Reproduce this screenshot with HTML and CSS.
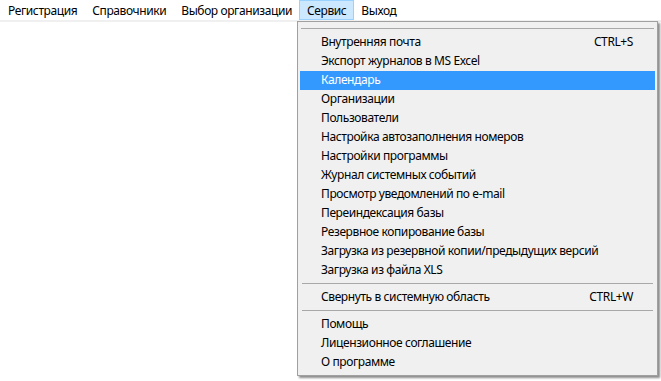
FILE: index.html
```html
<!DOCTYPE html>
<html>
  <head>
    <meta charset="utf-8">
    <title>Сервис</title>
    <link rel="stylesheet" href="styles.css">
  </head>
  <body>
    <nav class="menubar">
      <div class="menubar-item">Регистрация</div>
      <div class="menubar-item">Справочники</div>
      <div class="menubar-item">Выбор организации</div>
      <div class="menubar-item menubar-item-open">Сервис</div>
      <div class="menubar-item">Выход</div>
    </nav>
    <div class="dropdown">
      <div class="dropdown-top"></div>
      <div class="item"><span>Внутренняя почта</span><span class="shortcut">CTRL+S</span></div>
      <div class="item"><span>Экспорт журналов в MS Excel</span></div>
      <div class="item item-active"><span>Календарь</span></div>
      <div class="item"><span>Организации</span></div>
      <div class="item"><span>Пользователи</span></div>
      <div class="item"><span>Настройка автозаполнения номеров</span></div>
      <div class="item"><span>Настройки программы</span></div>
      <div class="item"><span>Журнал системных событий</span></div>
      <div class="item"><span>Просмотр уведомлений по e-mail</span></div>
      <div class="item"><span>Переиндексация базы</span></div>
      <div class="item"><span>Резервное копирование базы</span></div>
      <div class="item"><span>Загрузка из резервной копии/предыдущих версий</span></div>
      <div class="item"><span>Загрузка из файла XLS</span></div>
      <div class="separator"></div>
      <div class="item"><span>Свернуть в системную область</span><span class="shortcut">CTRL+W</span></div>
      <div class="separator"></div>
      <div class="item"><span>Помощь</span></div>
      <div class="item"><span>Лицензионное соглашение</span></div>
      <div class="item"><span>О программе</span></div>
    </div>
  </body>
</html>
```

FILE: styles.css
```css
body {
  margin: 0;
  background: white;
  color: black;
  font-family: "Noto Sans", "Open Sans", sans-serif;
  font-size: 12px;
  letter-spacing: -0.4px;
}

.menubar {
  display: flex;
  height: 20px;
  border-bottom: 2px solid #f0f0f0;
}

.menubar-item {
  border: 1px solid transparent;
  height: 16px;
  line-height: 16px;
  margin-right: -1px;
  padding: 2px 7px 0;
}

.menubar-item-open {
  background: #cce8ff;
  border-color: #99d1ff;
}

.dropdown {
  background: #f0f0f0;
  border: 1px solid #a0a0a0;
  box-shadow: 2px 2px 2px rgba(0, 0, 0, 0.45);
  left: 297px;
  padding: 2px 2px 3px;
  position: absolute;
  top: 21px;
  width: 355px;
}

.dropdown-top {
  border-bottom: 1px solid #a8a8a8;
  height: 4px;
  margin: 0 1px 4px;
}

.item {
  display: flex;
  height: 19px;
  justify-content: space-between;
  line-height: 18px;
  padding: 0 22px 0 21px;
}

.item-active {
  background: #3399ff;
  color: white;
}

.separator {
  border-top: 1px solid #a8a8a8;
  height: 4px;
  margin: 3px 2px 0;
}
```
